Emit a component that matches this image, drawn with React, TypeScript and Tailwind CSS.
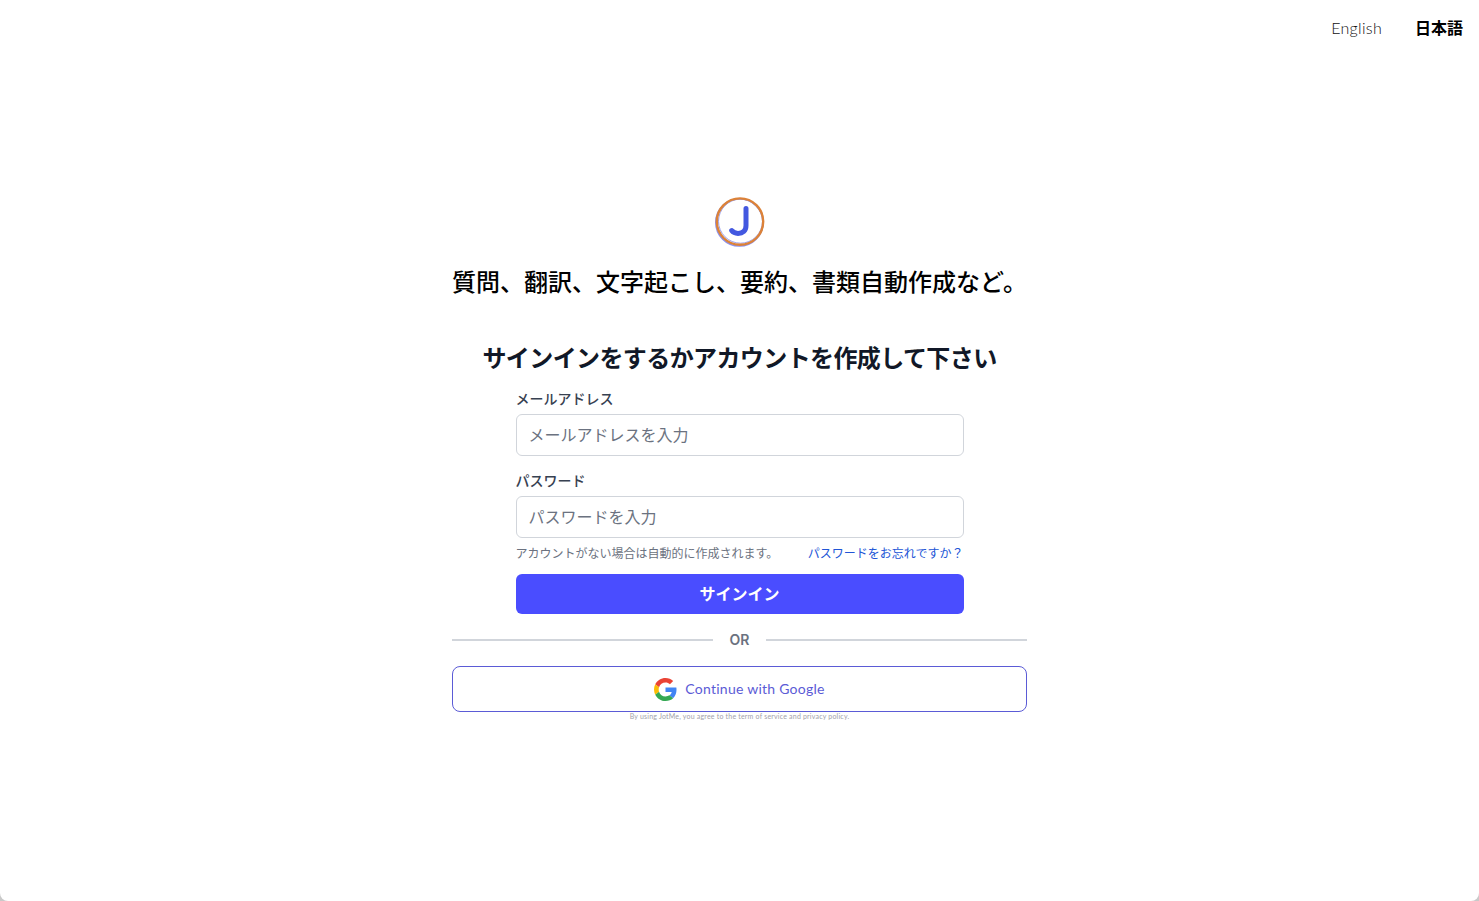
const sans = "font-['Inter','Noto_Sans_CJK_JP',sans-serif]";

function GoogleIcon() {
  return (
    <svg width="23" height="23" viewBox="0 0 48 48" aria-hidden="true">
      <path fill="#EA4335" d="M24 9.5c3.54 0 6.71 1.22 9.21 3.6l6.85-6.85C35.9 2.38 30.47 0 24 0 14.62 0 6.51 5.38 2.56 13.22l7.98 6.19C12.43 13.72 17.74 9.5 24 9.5z" />
      <path fill="#4285F4" d="M46.98 24.55c0-1.57-.15-3.09-.38-4.55H24v9.02h12.94c-.58 2.96-2.26 5.48-4.78 7.18l7.73 6c4.51-4.18 7.09-10.36 7.09-17.65z" />
      <path fill="#FBBC05" d="M10.53 28.59c-.48-1.45-.76-2.99-.76-4.59s.27-3.14.76-4.59l-7.98-6.19C.92 16.46 0 20.12 0 24c0 3.88.92 7.54 2.56 10.78l7.97-6.19z" />
      <path fill="#34A853" d="M24 48c6.48 0 11.93-2.13 15.89-5.81l-7.73-6c-2.15 1.45-4.92 2.3-8.16 2.3-6.26 0-11.57-4.22-13.47-9.91l-7.98 6.19C6.51 42.62 14.62 48 24 48z" />
    </svg>
  );
}

function Logo() {
  return (
    <svg width="50" height="50" viewBox="0 0 50 50" aria-hidden="true">
      <circle cx="24.4" cy="25.4" r="23.6" fill="none" stroke="#8a90ee" strokeWidth="1.6" />
      <circle cx="25.5" cy="24.2" r="22" fill="none" stroke="#9aa0ee" strokeWidth="1" />
      <circle cx="25" cy="24.6" r="23.2" fill="none" stroke="#dc8238" strokeWidth="2.4" />
      <path d="M31 11.5V28.5c0 5.4-3.2 7.9-8 7.9-2.8 0-4.9-.9-6.3-2.8" fill="none" stroke="#4358e0" strokeWidth="5" strokeLinecap="round" strokeLinejoin="round" />
    </svg>
  );
}

export default function App() {
  return (
    <div className="min-h-[901px] bg-[#c9c9c9]">
      <div className={`${sans} h-[901px] rounded-b-lg bg-white overflow-hidden`}>
        <header className="flex h-14 items-center justify-end gap-[33px] pr-4">
          <span className="font-['Lato','Noto_Sans_CJK_JP',sans-serif] text-base font-light tracking-[0.3px] text-[#111111]">English</span>
          <span className="text-base font-bold text-black">日本語</span>
        </header>
        <main className="mx-auto flex w-[575px] flex-col items-center pt-[141px]">
          <Logo />
          <h1 className="mt-5 whitespace-nowrap text-2xl leading-8 font-medium text-black">質問、翻訳、文字起こし、要約、書類自動作成など。</h1>
          <h2 className="mt-11 whitespace-nowrap text-2xl leading-8 font-bold tracking-tight text-[#111827]">サインインをするかアカウントを作成して下さい</h2>
          <form className="mt-[15px] flex w-[448px] flex-col">
            <label className="h-5 text-sm leading-[18px] font-medium text-[#374151]">メールアドレス</label>
            <input placeholder="メールアドレスを入力" className="mt-1 h-[42px] w-full rounded-md border border-[#d1d5db] bg-white px-3 text-base outline-none placeholder:text-[#6b7280]" />
            <label className="mt-4 h-5 text-sm leading-[18px] font-medium text-[#374151]">パスワード</label>
            <input placeholder="パスワードを入力" className="mt-1 h-[42px] w-full rounded-md border border-[#d1d5db] bg-white px-3 text-base outline-none placeholder:text-[#6b7280]" />
            <div className="mt-2 flex items-center justify-between text-xs leading-4">
              <span className="text-[#6b7280]">アカウントがない場合は自動的に作成されます。</span>
              <a className="text-[#2155d6]">パスワードをお忘れですか？</a>
            </div>
            <button type="button" className="mt-3 h-10 w-full rounded-md bg-[#4a4dff] text-base font-bold text-white">サインイン</button>
          </form>
          <div className="mt-4 flex h-5 w-full items-center gap-[17px]">
            <div className="h-0.5 flex-1 bg-[#d1d5db]" />
            <span className="text-sm font-semibold text-[#6b7280]">OR</span>
            <div className="h-0.5 flex-1 bg-[#d1d5db]" />
          </div>
          <button type="button" className="mt-4 flex h-[46px] w-full items-center justify-center gap-2 rounded-lg border border-[#5b5bd6] bg-white font-['Lato',sans-serif] text-sm tracking-[0.25px] text-[#5b5bd6]">
            <GoogleIcon />
            Continue with Google
          </button>
          <p className="font-['Lato',sans-serif] text-[7px] leading-[9px] tracking-[0.2px] text-[#a1a1aa]">By using JotMe, you agree to the term of service and privacy policy.</p>
        </main>
      </div>
    </div>
  );
}
